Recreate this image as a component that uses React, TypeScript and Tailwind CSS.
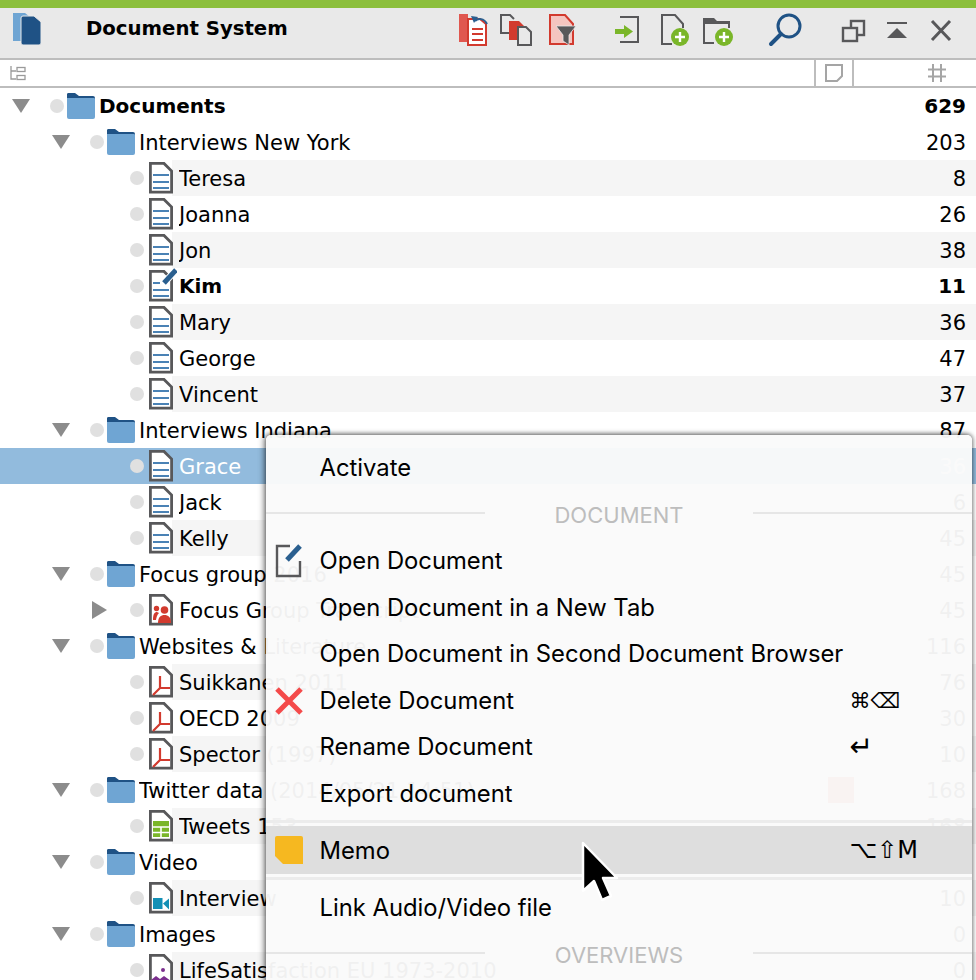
import React from "react";

const DOC_OUTLINE = "M150.400 163.400h13.600l7.600 7.600v21.200h-21.200z";
const Doc = ({ children }: { children?: React.ReactNode }) => (
  <svg width="28" height="34" viewBox="147 161 28 34" className="shrink-0">
    <path d={DOC_OUTLINE} fill="#fff" stroke="#58585a" strokeWidth="2.800" />
    {children}
  </svg>
);
const TextLines = () => (
  <g stroke="#4a82b5" strokeWidth="2">
    <path d="M153 175h16M153 182h16M153 188h16" />
  </g>
);
const EditDoc = () => (
  <svg width="30" height="36" viewBox="147 160 30 36" className="shrink-0">
    <path d={DOC_OUTLINE} fill="#fff" stroke="#58585a" strokeWidth="2.800" />
    <g stroke="#4a82b5" strokeWidth="2">
      <path d="M153 175h7M153 182h16M153 188h16" />
    </g>
    <path d="M164 175l12-13" stroke="#fff" strokeWidth="7" />
    <path d="M164 175l12-13" stroke="#2a5f8f" strokeWidth="5" />
  </svg>
);
const Pdf = () => (
  <Doc>
    <path d="M160 172v12M160 184h10M160 184l-7 7" stroke="#d23a2e" strokeWidth="2.200" fill="none" />
  </Doc>
);
const Group = () => (
  <Doc>
    <circle cx="164.500" cy="178" r="3.800" fill="#d23a2e" />
    <path d="M158 191c0-6 3-8 6.500-8s6.500 2 6.500 8z" fill="#d23a2e" />
    <circle cx="156.500" cy="176.500" r="2.700" fill="#d23a2e" />
    <path d="M153 188c0-6 1.500-8 4-8l2 1c-2 2-2.500 4-3 7z" fill="#d23a2e" />
  </Doc>
);
const Sheet = () => (
  <Doc>
    <rect x="153" y="173" width="16" height="16" fill="#7ab629" />
    <path d="M153 179h16M153 184.500h16M161 179v10" stroke="#fff" strokeWidth="1.600" />
  </Doc>
);
const VideoDoc = () => (
  <Doc>
    <rect x="153" y="178" width="9.500" height="11" fill="#1390b6" />
    <path d="M163 183.500l6-5v11z" fill="#1390b6" />
  </Doc>
);
const ImageDoc = () => (
  <Doc>
    <circle cx="163" cy="178" r="2" fill="#7b2f8e" />
    <path d="M151 191v-3l5-4 4 3 4-3 7 5v2z" fill="#7b2f8e" />
  </Doc>
);
const Folder = () => (
  <svg width="28" height="26" viewBox="0 0 28 26" className="shrink-0">
    <path d="M0 3a2 2 0 0 1 2-3h6l4 3h14a2 2 0 0 1 2 2v4H0z" fill="#1f5285" />
    <path d="M0 5h27a1 1 0 0 1 1 1v18a2 2 0 0 1-2 2H2a2 2 0 0 1-2-2z" fill="#6fa5d3" />
  </svg>
);

type Row = {
  t: string;
  n: string;
  lvl: 0 | 1 | 2;
  icon?: React.ReactNode;
  bold?: boolean;
  band?: boolean;
  sel?: boolean;
  caret?: "down" | "right";
  memo?: boolean;
};

const rows: Row[] = [
  { t: "Documents", n: "629", lvl: 0, bold: true, caret: "down" },
  { t: "Interviews New York", n: "203", lvl: 1, caret: "down" },
  { t: "Teresa", n: "8", lvl: 2, band: true, icon: <Doc><TextLines /></Doc> },
  { t: "Joanna", n: "26", lvl: 2, icon: <Doc><TextLines /></Doc> },
  { t: "Jon", n: "38", lvl: 2, band: true, icon: <Doc><TextLines /></Doc> },
  { t: "Kim", n: "11", lvl: 2, bold: true, icon: <EditDoc /> },
  { t: "Mary", n: "36", lvl: 2, band: true, icon: <Doc><TextLines /></Doc> },
  { t: "George", n: "47", lvl: 2, icon: <Doc><TextLines /></Doc> },
  { t: "Vincent", n: "37", lvl: 2, band: true, icon: <Doc><TextLines /></Doc> },
  { t: "Interviews Indiana", n: "87", lvl: 1, caret: "down" },
  { t: "Grace", n: "36", lvl: 2, sel: true, icon: <Doc><TextLines /></Doc> },
  { t: "Jack", n: "6", lvl: 2, icon: <Doc><TextLines /></Doc> },
  { t: "Kelly", n: "45", lvl: 2, band: true, icon: <Doc><TextLines /></Doc> },
  { t: "Focus group 2016", n: "45", lvl: 1, caret: "down" },
  { t: "Focus Group Transcript", n: "45", lvl: 2, caret: "right", icon: <Group /> },
  { t: "Websites & Literature", n: "116", lvl: 1, caret: "down" },
  { t: "Suikkanen 2011", n: "76", lvl: 2, band: true, icon: <Pdf /> },
  { t: "OECD 2009", n: "30", lvl: 2, icon: <Pdf /> },
  { t: "Spector (1997)", n: "10", lvl: 2, band: true, icon: <Pdf /> },
  { t: "Twitter data (2014/05/21 14:51)", n: "168", lvl: 1, caret: "down", memo: true },
  { t: "Tweets 153", n: "168", lvl: 2, band: true, icon: <Sheet /> },
  { t: "Video", n: "10", lvl: 1, caret: "down" },
  { t: "Interview", n: "10", lvl: 2, band: true, icon: <VideoDoc /> },
  { t: "Images", n: "0", lvl: 1, caret: "down" },
  { t: "LifeSatisfaction EU 1973-2010", n: "0", lvl: 2, band: true, icon: <ImageDoc /> },
];

const indent = { 0: "pl-[12px]", 1: "pl-[52px]", 2: "pl-[92px]" };

function TreeRow({ r }: { r: Row }) {
  const bg = r.sel
    ? "bg-[#92bbdd] text-white"
    : r.band
    ? "bg-[linear-gradient(to_right,transparent_172px,#f5f5f5_172px)] text-black"
    : "text-black";
  return (
    <div className={`h-[36px] flex items-center ${indent[r.lvl]} ${bg} ${r.bold ? "font-bold text-[20px]" : "text-[21px]"}`}>
      <div className="w-[38px] shrink-0 flex items-center">
        {r.caret === "down" && (
          <svg width="18" height="14" viewBox="0 0 18 14"><path d="M0 0h18l-9 14z" fill="#8c8c8c" /></svg>
        )}
        {r.caret === "right" && (
          <svg width="15" height="18" viewBox="0 0 15 18"><path d="M0 0l15 9-15 9z" fill="#8c8c8c" /></svg>
        )}
      </div>
      <div className="w-[14px] h-[14px] rounded-full bg-[#e0e0e0] shrink-0 mr-[3px]" />
      <div className="w-[32px] shrink-0 flex items-center">{r.icon ?? <Folder />}</div>
      <span className={`flex-1 whitespace-nowrap overflow-hidden ${r.bold ? "" : "pt-[2px]"}`}>{r.t}</span>
      <div className="w-[40px] shrink-0 flex justify-end">
        {r.memo && <div className="w-[26px] h-[26px] bg-[#e8533f]" />}
      </div>
      <span className={`w-[122px] shrink-0 text-right pr-[10px] ${r.bold ? "" : "pt-[2px]"}`}>{r.n}</span>
    </div>
  );
}

const Item = ({ children, icon, sc, scSize }: { children: React.ReactNode; icon?: React.ReactNode; sc?: string; scSize?: string }) => (
  <div className="h-[46.500px] flex items-center">
    <div className="w-[53.500px] pl-[9px] shrink-0 flex items-center">{icon}</div>
    <span className="w-[530px] shrink-0 whitespace-nowrap text-black">{children}</span>
    {sc && <span className={`font-['DejaVu_Sans',sans-serif] text-black whitespace-nowrap ${scSize ?? "text-[21px]"}`}>{sc}</span>}
  </div>
);

const Section = ({ t }: { t: string }) => (
  <div className="h-[46.500px] flex items-start text-[22px]">
    <div className="w-[219px] h-[2px] bg-[#e6e6e6] mt-[20px]" />
    <div className="w-[268px] text-center text-[#bdbdbd] leading-[47px]">{t}</div>
    <div className="flex-1 h-[2px] bg-[#e6e6e6] mt-[20px]" />
  </div>
);

export default function App() {
  return (
    <div className="relative w-[976px] h-[980px] overflow-hidden bg-white font-['DejaVu_Sans',sans-serif] text-[21px] leading-[36px]">
      <div className="h-[8px] bg-[#8cbf3c]" />
      <div className="h-[50px] bg-[#e9e9e9] flex items-center pb-[8px]">
        <svg width="32" height="36" viewBox="12 12 32 36" className="ml-[12px] shrink-0">
          <path d="M13 14h12l5 4v24H13z" fill="#6fa5d3" />
          <path d="M21 19a2 2 0 0 1 2-2h11l7 6v21a2 2 0 0 1-2 2H23a2 2 0 0 1-2-2z" fill="#1f5285" stroke="#e9e9e9" strokeWidth="1" />
        </svg>
        <span className="ml-[42px] w-[372px] shrink-0 font-bold text-[19.700px] text-black whitespace-nowrap">Document System</span>
        <svg width="32" height="40" viewBox="458 9 32 40" className="shrink-0">
          <rect x="459" y="14" width="9" height="28" fill="#e0574f" />
          <path d="M468 19h12l6 5v21h-18z" fill="#fff" stroke="#d23a2e" strokeWidth="2" />
          <path d="M472 29h11M472 34h11M472 40h11" stroke="#d23a2e" strokeWidth="2" />
          <path d="M475 21c3-3 9-3 12 3" fill="none" stroke="#2a5f8f" strokeWidth="2" />
          <path d="M471 16l7 1-4 6z" fill="#2a5f8f" />
        </svg>
        <svg width="34" height="40" viewBox="500 9 34 40" className="ml-[10px] shrink-0">
          <path d="M515 33h-14V15h9l4 4" fill="none" stroke="#58585a" strokeWidth="2" />
          <path d="M509 21h10l5 5v14h-15z" fill="#d23a2e" />
          <path d="M518 27h8l5 5v13h-13z" fill="#e9e9e9" stroke="#58585a" strokeWidth="2" />
        </svg>
        <svg width="30" height="40" viewBox="548 9 30 40" className="ml-[14px] shrink-0">
          <path d="M550 15h15l8 9v20h-23z" fill="#f4c5c0" stroke="#d23a2e" strokeWidth="2" />
          <path d="M556 26h20l-7 9v10l-6-4v-6z" fill="#58585a" stroke="#e9e9e9" strokeWidth="0.800" />
        </svg>
        <svg width="28" height="40" viewBox="613 9 28 40" className="ml-[35px] shrink-0">
          <path d="M620 17h18v25h-18" fill="none" stroke="#58585a" strokeWidth="2" />
          <path d="M615 29h9v-4l9 6.500-9 6.500v-4h-9z" fill="#7ab629" />
        </svg>
        <svg width="30" height="40" viewBox="660 9 30 40" className="ml-[19px] shrink-0">
          <path d="M672 44h-10V15h13l8 9v4" fill="none" stroke="#58585a" strokeWidth="2" />
          <circle cx="680" cy="37" r="9" fill="#7ab629" />
          <path d="M675 37h10M680 32v10" stroke="#fff" strokeWidth="2.400" />
        </svg>
        <svg width="32" height="40" viewBox="702 9 32 40" className="ml-[12px] shrink-0">
          <path d="M714 43h-10V19" fill="none" stroke="#58585a" strokeWidth="2" />
          <path d="M703 18h11l3 3h13v7h-2v-4h-25z" fill="#58585a" />
          <circle cx="724" cy="37" r="9" fill="#7ab629" />
          <path d="M719 37h10M724 32v10" stroke="#fff" strokeWidth="2.400" />
        </svg>
        <svg width="36" height="40" viewBox="768 9 36 40" className="ml-[34px] shrink-0">
          <circle cx="789" cy="26" r="11" fill="none" stroke="#1f5285" strokeWidth="3" />
          <path d="M781 34l-10 10" stroke="#1f5285" strokeWidth="4" strokeLinecap="round" />
        </svg>
        <svg width="26" height="40" viewBox="841 9 26 40" className="ml-[37px] shrink-0">
          <rect x="851" y="21" width="13" height="14" fill="none" stroke="#58585a" strokeWidth="2.400" />
          <rect x="843" y="28" width="14" height="13" fill="#e9e9e9" stroke="#58585a" strokeWidth="2.400" />
        </svg>
        <svg width="22" height="40" viewBox="886 9 22 40" className="ml-[19px] shrink-0">
          <path d="M887 23h20" stroke="#58585a" strokeWidth="2" />
          <path d="M897 28l10 10h-20z" fill="#58585a" />
        </svg>
        <svg width="22" height="40" viewBox="930 9 22 40" className="ml-[22px] shrink-0">
          <path d="M932 21l18 19M950 21l-18 19" stroke="#58585a" strokeWidth="3" />
        </svg>
      </div>
      <div className="h-[30px] border-y-2 border-[#bdbdbd] flex items-center">
        <svg width="16" height="16" viewBox="0 0 16 16" className="ml-[10px] shrink-0">
          <path d="M1 1v13h5M1 6h5" fill="none" stroke="#9a9a9a" strokeWidth="1.300" />
          <rect x="7" y="2.500" width="8" height="4" fill="none" stroke="#9a9a9a" strokeWidth="1.300" />
          <rect x="7" y="10.500" width="8" height="4" fill="none" stroke="#9a9a9a" strokeWidth="1.300" />
        </svg>
        <div className="ml-[788px] w-[40px] h-full border-x-2 border-[#bdbdbd] shrink-0 flex items-center justify-center">
          <svg width="20" height="20" viewBox="0 0 20 20">
            <path d="M2 2h16v11l-5 5H2z" fill="none" stroke="#a5a5a5" strokeWidth="2" />
          </svg>
        </div>
        <svg width="20" height="20" viewBox="0 0 20 20" className="ml-[73px] shrink-0">
          <path d="M6 1v18M14 1v18M1 6.500h18M1 13.500h18" stroke="#a5a5a5" strokeWidth="2" />
        </svg>
      </div>
      <div>
        {rows.map((r) => (
          <TreeRow key={r.t} r={r} />
        ))}
      </div>

      <div className="absolute left-[266px] top-[435px] right-[4px] bottom-[-10px] rounded-t-[5px] bg-[#fafafa]/[0.96] shadow-[-2px_0_6px_rgba(0,0,0,0.45),0_-1px_4px_rgba(0,0,0,0.35),2px_0_4px_rgba(0,0,0,0.15)] pt-[10px] font-['Inter',sans-serif] text-[23.800px]">
        <Item>Activate</Item>
        <Section t="DOCUMENT" />
        <Item
          icon={
            <svg width="28" height="34" viewBox="275 543 28 34">
              <path d="M290 545h-13v30h23v-15" fill="none" stroke="#58585a" strokeWidth="2.400" />
              <path d="M287 559l13-14" stroke="#2a5f8f" strokeWidth="5" />
            </svg>
          }
        >
          Open Document
        </Item>
        <Item>Open Document in a New Tab</Item>
        <Item>Open Document in Second Document Browser</Item>
        <Item
          sc="⌘⌫"
          icon={
            <svg width="28" height="28" viewBox="0 0 28 28">
              <path d="M2 2l24 24M26 2L2 26" stroke="#f44a4a" strokeWidth="5" />
            </svg>
          }
        >
          Delete Document
        </Item>
        <Item sc="↵" scSize="text-[28px]">Rename Document</Item>
        <Item>Export document</Item>
        <div className="h-[3px] bg-[#ececec] mt-[2.500px]" />
        <div className="mt-[3px] h-[48px] bg-[#dedede] flex items-center">
          <div className="w-[53.500px] pl-[9px] shrink-0 flex items-center">
            <svg width="28" height="28" viewBox="0 0 28 28">
              <path d="M2 0h24a2 2 0 0 1 2 2v26H8l-8-8V2a2 2 0 0 1 2-2z" fill="#f6b820" />
            </svg>
          </div>
          <span className="w-[530px] shrink-0 text-black pt-[2px]">Memo</span>
          <span className="font-['DejaVu_Sans',sans-serif] text-[24px] text-black whitespace-nowrap">⌥⇧M</span>
        </div>
        <div className="h-[3px] bg-[#ececec] mt-[3px] mb-[5px]" />
        <Item>Link Audio/Video file</Item>
        <div className="mt-[1px]">
          <Section t="OVERVIEWS" />
        </div>
      </div>

      <svg width="38" height="62" viewBox="581 841 38 62" className="absolute left-[581px] top-[841px]">
        <path d="M583 843v48l11-10 8 19 9-4-8-18h14z" fill="#000" stroke="#fff" strokeWidth="2.500" strokeLinejoin="round" />
      </svg>
    </div>
  );
}
